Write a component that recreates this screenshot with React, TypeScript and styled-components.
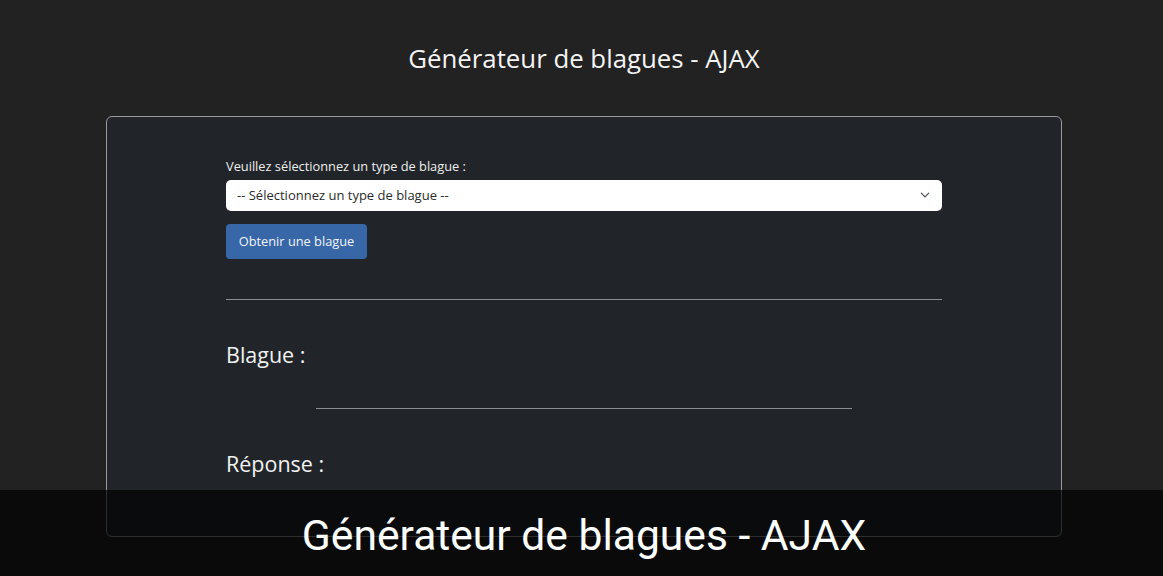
import React from "react";
import styled, { createGlobalStyle } from "styled-components";

const Global = createGlobalStyle`
  html, body { margin: 0; padding: 0; background: #222222; }
  body { font-family: "Open Sans", "Noto Sans", sans-serif; color: #f1f1f1; height: 576px; overflow: hidden; }
  * { box-sizing: border-box; }
`;

const Page = styled.div`
  position: relative;
  height: 576px;
  padding: 43px 0 0 5px;
`;

const Title = styled.h2`
  margin: 0 0 42px;
  text-align: center;
  font-size: 25.8px;
  font-weight: 400;
  line-height: 1.2;
  color: #f4f4f4;
`;

const Card = styled.section`
  width: 956px;
  height: 421px;
  margin: 0 auto;
  background: #212529;
  border: 1px solid #9a9a9c;
  border-radius: 6px;
  padding: 40px 0 0;
`;

const Column = styled.div`
  width: 716px;
  margin: 0 auto;
  display: flex;
  flex-direction: column;
`;

const Label = styled.label`
  font-size: 12.8px;
  line-height: 19px;
  margin-bottom: 4px;
  color: #eeeeee;
`;

const SelectBox = styled.div`
  height: 31px;
  background: #ffffff;
  border-radius: 5px;
  display: flex;
  align-items: center;
  justify-content: space-between;
  padding: 0 12px 0 11px;
  font-size: 13px;
  color: #2b2b2b;
`;

const Button = styled.button`
  align-self: flex-start;
  margin-top: 13px;
  height: 35px;
  width: 141px;
  border: none;
  border-radius: 4px;
  background: #3767a6;
  color: #f2f4f8;
  font-family: inherit;
  font-size: 12.8px;
  padding: 0;
`;

const Rule = styled.hr<{ $inset?: number; $top: number }>`
  border: none;
  border-top: 1px solid #8c8d90;
  margin: ${(p) => p.$top}px ${(p) => p.$inset ?? 0}px 0;
  height: 0;
`;

const Heading = styled.h3<{ $top: number }>`
  margin: ${(p) => p.$top}px 0 0;
  font-size: 21.5px;
  font-weight: 400;
  line-height: 26px;
  color: #f2f2f2;
`;

const Caption = styled.div`
  position: absolute;
  left: 0;
  right: 0;
  bottom: 0;
  height: 86px;
  background: rgba(0, 0, 0, 0.7);
  display: flex;
  align-items: center;
  justify-content: center;
  font-family: Roboto, "Noto Sans", sans-serif;
  font-size: 42.6px;
  color: #ffffff;
  padding: 4px 0 0 5px;
`;

const Chevron = () => (
  <svg width="10" height="10" viewBox="0 0 16 16" fill="none">
    <path d="M2 5l6 6 6-6" stroke="#4a4f55" strokeWidth="2" strokeLinecap="round" strokeLinejoin="round" />
  </svg>
);

export default function App() {
  return (
    <>
      <Global />
      <Page>
        <Title>Générateur de blagues - AJAX</Title>
        <Card>
          <Column>
            <Label>Veuillez sélectionnez un type de blague :</Label>
            <SelectBox>
              <span>-- Sélectionnez un type de blague --</span>
              <Chevron />
            </SelectBox>
            <Button>Obtenir une blague</Button>
            <Rule $top={40} />
            <Heading $top={42}>Blague :</Heading>
            <Rule $top={40} $inset={90} />
            <Heading $top={42}>Réponse :</Heading>
          </Column>
        </Card>
        <Caption>Générateur de blagues - AJAX</Caption>
      </Page>
    </>
  );
}
